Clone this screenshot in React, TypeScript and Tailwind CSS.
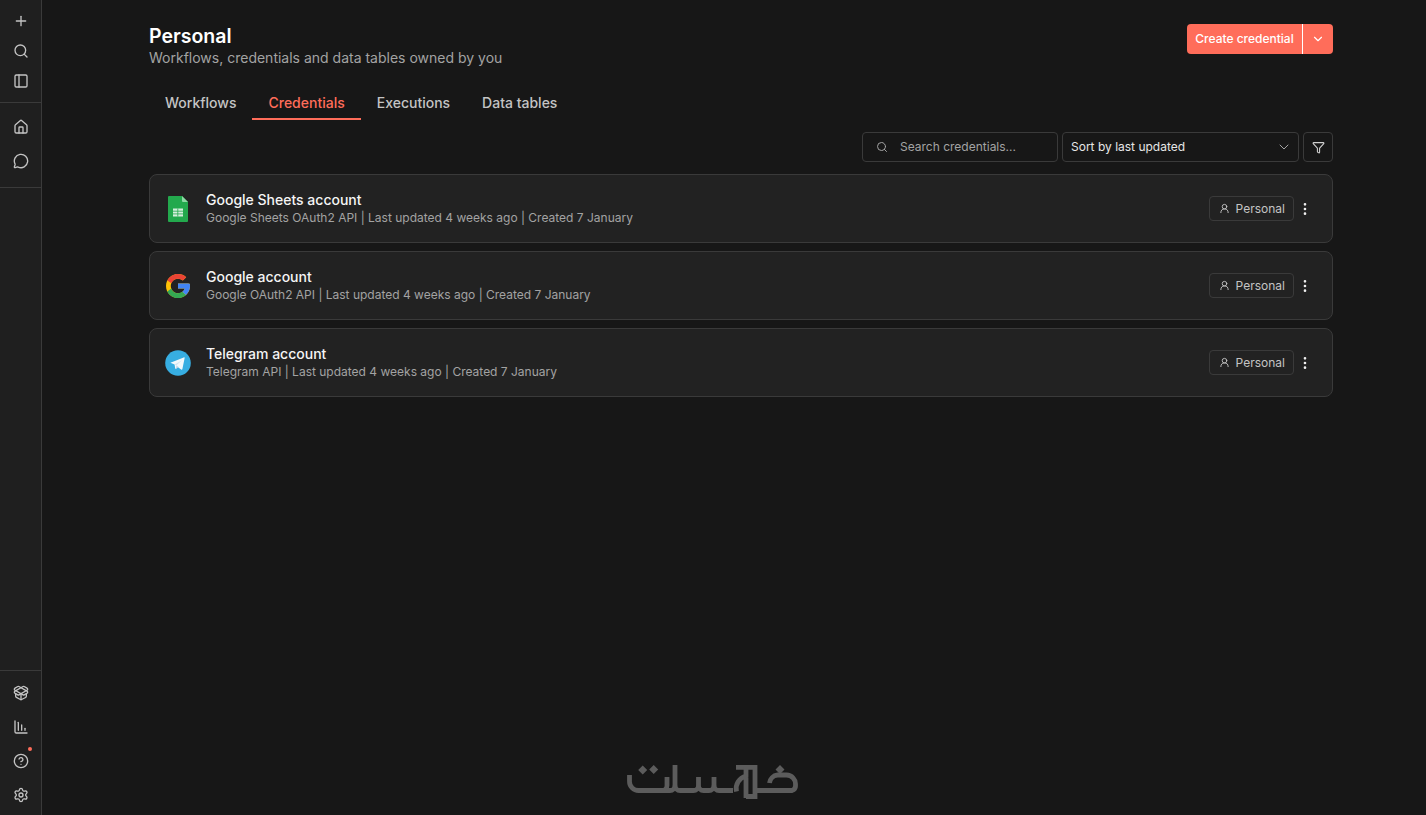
import type { FC, ReactNode } from "react";
import {
  ChartColumnDecreasing,
  ChevronDown,
  CircleHelp,
  EllipsisVertical,
  Funnel,
  House,
  MessageCircle,
  PackageOpen,
  PanelLeft,
  Plus,
  Search,
  Settings,
  UserRound,
} from "lucide-react";

const SideIcon: FC<{ children: ReactNode }> = ({ children }) => (
  <div className="relative flex h-[34px] w-full items-center justify-center text-[#c4c4c4]">{children}</div>
);

const TopIcon: FC<{ children: ReactNode }> = ({ children }) => (
  <div className="flex h-[30px] w-full items-center justify-center text-[#c4c4c4]">{children}</div>
);

const SheetsIcon = () => (
  <svg width="20" height="26" viewBox="0 0 20 26">
    <path d="M1 0h13l6 6v19a1 1 0 0 1-1 1H1a1 1 0 0 1-1-1V1a1 1 0 0 1 1-1z" fill="#23a94d" />
    <path d="M14 0l6 6h-5a1 1 0 0 1-1-1z" fill="#8ed8a4" />
    <path d="M5 12.500h10v8H5z" fill="#d5eedd" />
    <path d="M5 15.200h10M5 17.900h10M9.800 12.500v8" stroke="#23a94d" strokeWidth="0.8" />
  </svg>
);

const GoogleIcon = () => (
  <svg width="24" height="24" viewBox="4 4 40 40">
    <path fill="#FFC107" d="M43.600 20.100H42V20H24v8h11.300C33.700 32.700 29.200 36 24 36c-6.600 0-12-5.400-12-12s5.400-12 12-12c3.100 0 5.800 1.200 8 3l5.700-5.700C34 6.100 29.300 4 24 4 13 4 4 13 4 24s9 20 20 20 20-9 20-20c0-1.300-.1-2.700-.4-3.900z" />
    <path fill="#EA4335" d="M6.300 14.700l6.600 4.800C14.700 15.100 19 12 24 12c3.100 0 5.800 1.200 8 3l5.700-5.700C34 6.100 29.300 4 24 4 16.300 4 9.700 8.300 6.300 14.700z" />
    <path fill="#34A853" d="M24 44c5.200 0 9.900-2 13.400-5.200l-6.200-5.200C29.200 35.100 26.700 36 24 36c-5.200 0-9.600-3.300-11.300-8l-6.500 5C9.500 39.600 16.200 44 24 44z" />
    <path fill="#4285F4" d="M43.600 20.100H42V20H24v8h11.300c-.8 2.200-2.200 4.200-4.100 5.600l6.200 5.200C37 39.200 44 34 44 24c0-1.300-.1-2.700-.4-3.900z" />
  </svg>
);

const TelegramIcon = () => (
  <svg width="26" height="26" viewBox="0 0 26 26">
    <circle cx="13" cy="13" r="12.800" fill="#37aee2" />
    <path d="M5.400 12.800l13.300-5.400c.6-.2 1.100.1.900.9l-2.200 10.600c-.2.800-.7 1-1.300.6l-3.400-2.500-1.700 1.600c-.4.400-.7.400-.8-.2l-.6-3.900z" fill="#f3f9fc" />
    <path d="M10.900 18.200c.1.600.4.600.8.200l1.700-1.600-2-1.500z" fill="#c8daea" />
    <path d="M11.400 15.300l5.700-5.100-7.500 4.300z" fill="#d2e5f1" />
  </svg>
);

// watermark logo, drawn as a picture
const Logo = () => (
  <svg width="172" height="34" viewBox="0 0 172 34" fill="none" stroke="#5c5c5c" strokeWidth="4.800">
    <path d="M2.500 10v6.500a9 9 0 0 0 9 9H35a5 5 0 0 0 5-5V12" />
    <path d="M48 0v20.500a5 5 0 0 1-5 5h-8" />
    <path d="M48 20.500a5 5 0 0 0 5 5h13.500a5 5 0 0 0 5-5V12" />
    <path d="M71.500 20.500a5 5 0 0 0 5 5H82a5 5 0 0 0 5-5V12" />
    <path d="M87 20.500a5 5 0 0 0 5 5h14" />
    <path d="M109 2.300h21M128 0v34M128 31.500h-9" />
    <path d="M119 2v9a13 13 0 0 0-9.500 15.500M119 11v22" />
    <path d="M128 25.500h37a5 5 0 0 0 3.500-5v-1a9 9 0 0 0-9-9.500h-9a9 9 0 0 0-8 8" />
    <path d="M15.700 .5l4.500 4.500-4.500 4.500L11.200 5zM26.700 0l4.500 4.500L26.700 9l-4.500-4.500zM153 0l4.500 4.500L153 9l-4.500-4.500z" fill="#5c5c5c" stroke="none" />
  </svg>
);

const credentials = [
  {
    name: "Google Sheets account",
    type: "Google Sheets OAuth2 API",
    icon: <SheetsIcon />,
  },
  { name: "Google account", type: "Google OAuth2 API", icon: <GoogleIcon /> },
  { name: "Telegram account", type: "Telegram API", icon: <TelegramIcon /> },
];

export default function App() {
  return (
    <div className="relative flex h-[815px] overflow-hidden bg-[#171717] font-['Inter',sans-serif] text-white">
      <aside className="flex w-[42px] shrink-0 flex-col border-r border-[#3a3a3a] bg-[#1f1f1f]">
        <div className="flex h-[103px] flex-col items-center border-b border-[#3a3a3a] pt-[6px]">
          <TopIcon><Plus size={16} /></TopIcon>
          <TopIcon><Search size={16} /></TopIcon>
          <TopIcon><PanelLeft size={16} /></TopIcon>
        </div>
        <div className="flex h-[85px] flex-col items-center border-b border-[#3a3a3a] pt-[7px]">
          <SideIcon><House size={16} /></SideIcon>
          <SideIcon><MessageCircle size={16} /></SideIcon>
        </div>
        <div className="mt-auto flex flex-col items-center border-t border-[#3a3a3a] pt-[5px] pb-[3px]">
          <SideIcon><PackageOpen size={16} /></SideIcon>
          <SideIcon><ChartColumnDecreasing size={16} /></SideIcon>
          <SideIcon>
            <CircleHelp size={16} />
            <span className="absolute top-[3px] right-[9px] h-1 w-1 rounded-full bg-[#ff6d5a]" />
          </SideIcon>
          <SideIcon><Settings size={16} /></SideIcon>
        </div>
      </aside>

      <main className="ml-[107px] w-[1184px] pt-6">
        <div className="flex items-start justify-between">
          <div>
            <h1 className="text-[19.500px] leading-[24px] font-semibold text-white">Personal</h1>
            <p className="text-sm leading-[20px] text-[#a3a3a3]">Workflows, credentials and data tables owned by you</p>
          </div>
          <div className="flex h-[30px] overflow-hidden rounded bg-[#ff6d5a] text-xs font-medium text-white">
            <span className="flex w-[116px] items-center justify-center border-r border-white">Create credential</span>
            <span className="flex w-[30px] items-center justify-center"><ChevronDown size={14} /></span>
          </div>
        </div>

        <nav className="mt-[19px] flex h-[33px] text-sm font-medium text-[#c4c4c4]">
          <span className="px-4 pt-[6px]">Workflows</span>
          <span className="border-b-2 border-[#ff6d5a] px-4 pt-[6px] text-[#ff6d5a]">Credentials</span>
          <span className="px-4 pt-[6px]">Executions</span>
          <span className="px-4 pt-[6px]">Data tables</span>
        </nav>

        <div className="mt-3 flex justify-end gap-1">
          <div className="flex h-[30px] w-[196px] items-center rounded border border-[#3a3a3a] pl-[13px] text-xs text-[#a3a3a3]">
            <Search size={12} className="mr-3" />
            <span>Search credentials...</span>
          </div>
          <div className="flex h-[30px] w-[237px] items-center justify-between rounded border border-[#3a3a3a] pr-[6px] pl-2 text-xs text-[#e6e6e6]">
            <span>Sort by last updated</span>
            <ChevronDown size={16} strokeWidth={1.500} className="text-[#a3a3a3]" />
          </div>
          <div className="flex h-[30px] w-[30px] items-center justify-center rounded border border-[#3a3a3a] text-[#d0d0d0]">
            <Funnel size={13} />
          </div>
        </div>

        <div className="mt-3 flex flex-col gap-2">
          {credentials.map((c) => (
            <div key={c.name} className="flex h-[69px] items-center rounded-lg border border-[#3a3a3a] bg-[#222222] pr-[19px] pl-[15px]">
              <div className="flex w-[26px] justify-center">{c.icon}</div>
              <div className="ml-[15px]">
                <div className="text-sm leading-[18px] font-[550] text-[#f5f5f5]">{c.name}</div>
                <div className="text-xs leading-[17px] text-[#a3a3a3]">
                  {c.type} | Last updated 4 weeks ago | Created 7 January
                </div>
              </div>
              <div className="ml-auto flex items-center gap-[3px]">
                <div className="flex h-[25px] items-center gap-[6px] rounded border border-[#3a3a3a] pr-2 pl-[9px] text-xs text-[#c4c4c4]">
                  <UserRound size={11} />
                  <span>Personal</span>
                </div>
                <EllipsisVertical size={16} className="text-[#f0f0f0]" />
              </div>
            </div>
          ))}
        </div>
      </main>

      <div className="absolute bottom-[16px] left-[627px]"><Logo /></div>
    </div>
  );
}
